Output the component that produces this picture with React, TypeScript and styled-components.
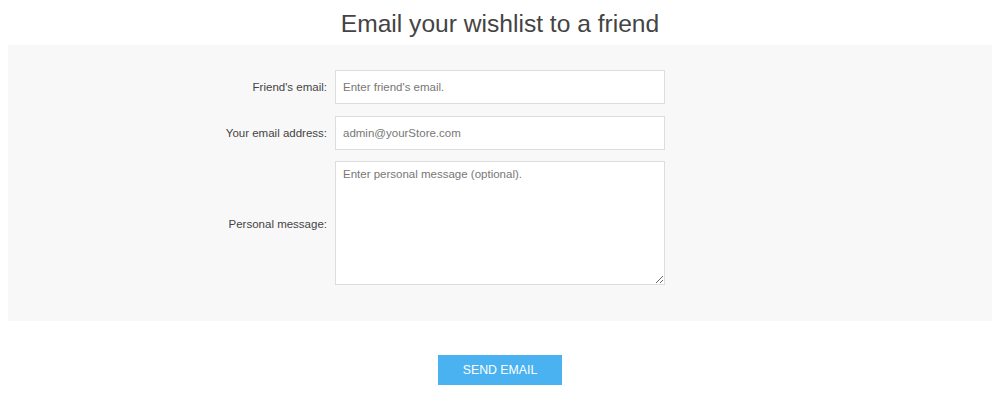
import React from 'react';
import styled, {createGlobalStyle} from 'styled-components';

const GlobalStyle = createGlobalStyle`
  body {
    margin: 8px;
    background: #ffffff;
    font-family: 'Liberation Sans', Arial, sans-serif;
    color: #444444;
  }
`;

const Title = styled.h1`
  margin: 0;
  height: 37px;
  text-align: center;
  font-size: 24.6px;
  font-weight: normal;
  line-height: 32px;
  color: #444444;
`;

const Panel = styled.div`
  background: #f8f8f8;
  padding: 25px 0 36px;
  display: grid;
  grid-template-columns: 1fr 330px 1fr;
  column-gap: 8px;
  row-gap: 12px;
  align-items: center;
`;

const Label = styled.label`
  grid-column: 1;
  text-align: right;
  font-size: 11.5px;
  color: #444444;
`;

const Input = styled.input`
  grid-column: 2;
  box-sizing: border-box;
  width: 100%;
  height: 34px;
  margin: 0;
  padding: 0 7px;
  border: 1px solid #dddddd;
  background: #ffffff;
  font-family: 'Liberation Sans', Arial, sans-serif;
  font-size: 11.5px;
  color: #777777;
  outline: none;
  &::placeholder {
    color: #777777;
  }
`;

const TextArea = styled.textarea`
  grid-column: 2;
  box-sizing: border-box;
  width: 100%;
  height: 124px;
  margin: -1px 0 0;
  padding: 6px 7px;
  border: 1px solid #dddddd;
  background: #ffffff;
  font-family: 'Liberation Sans', Arial, sans-serif;
  font-size: 11.5px;
  color: #777777;
  outline: none;
  display: block;
  &::placeholder {
    color: #777777;
  }
`;

const Actions = styled.div`
  display: flex;
  justify-content: center;
  padding-top: 34px;
`;

const SendButton = styled.button`
  width: 124px;
  height: 30px;
  border: none;
  background: #4ab2f1;
  color: #ffffff;
  font-family: 'Liberation Sans', Arial, sans-serif;
  font-size: 12.3px;
  text-transform: uppercase;
  cursor: pointer;
`;

export default function App() {
  return (
    <>
      <GlobalStyle />
      <Title>Email your wishlist to a friend</Title>
      <Panel>
        <Label htmlFor="FriendEmail">Friend's email:</Label>
        <Input id="FriendEmail" type="email" placeholder="Enter friend's email." />
        <Label htmlFor="YourEmailAddress">Your email address:</Label>
        <Input id="YourEmailAddress" type="email" defaultValue="admin@yourStore.com" />
        <Label htmlFor="PersonalMessage">Personal message:</Label>
        <TextArea id="PersonalMessage" placeholder="Enter personal message (optional)." />
      </Panel>
      <Actions>
        <SendButton type="button">Send email</SendButton>
      </Actions>
    </>
  );
}
